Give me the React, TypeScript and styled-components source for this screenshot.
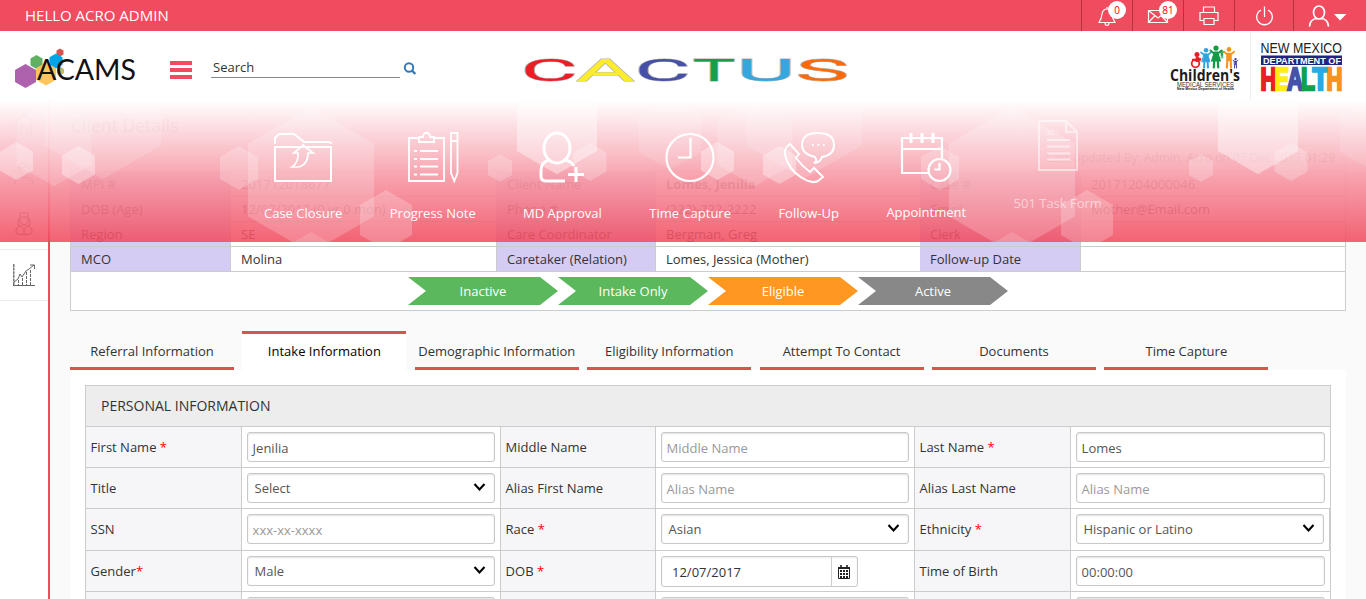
import React from 'react';
import styled, { createGlobalStyle, css } from 'styled-components';

const GlobalStyle = createGlobalStyle`
  * { box-sizing: border-box; }
  html, body { margin: 0; padding: 0; overflow: hidden; }
  body { background: #fafafa; color: #333; font-family: 'Open Sans', 'Noto Sans', sans-serif; font-size: 13px; }
`;

const RED = '#f14b5f';
const LINE = '#ccc';

const Page = styled.div`
  position: relative;
  width: 1366px;
  height: 599px;
  overflow: hidden;
  display: flex;
  flex-direction: column;
`;

const TopBar = styled.header`
  height: 31px;
  flex: none;
  display: flex;
  align-items: stretch;
  background: ${RED};
  color: #fff;
`;

const Greeting = styled.div`
  flex: 1;
  padding-left: 25px;
  font-size: 15px;
  line-height: 31px;
`;

const TopButton = styled.div<{ $width: number }>`
  position: relative;
  width: ${(p) => p.$width}px;
  border-left: 1px solid #b5323f;
  display: flex;
  align-items: center;
  justify-content: center;
`;

const Badge = styled.span`
  position: absolute;
  top: 1px;
  right: 6px;
  width: 18px;
  height: 18px;
  border-radius: 50%;
  background: #fff;
  color: #f00;
  font: 10px/18px 'Open Sans', sans-serif;
  text-align: center;
`;

const Header = styled.div`
  height: 69px;
  flex: none;
  display: flex;
  align-items: flex-start;
  background: #fff;
`;

const LogoSlot = styled.div`
  width: 170px;
  height: 69px;
`;

const Burger = styled.div`
  margin-top: 30px;
  width: 22px;
  height: 18px;
  display: flex;
  flex-direction: column;
  justify-content: space-between;
`;

const BurgerLine = styled.span`
  height: 4px;
  background: ${RED};
`;

const SearchBox = styled.div`
  margin: 24px 0 0 19px;
  padding-left: 2px;
  width: 189px;
  height: 23px;
  border-bottom: 1px solid #888;
  line-height: 25px;
`;

const SearchGlyph = styled.svg`
  margin: 31px 0 0 3px;
`;

const CactusSlot = styled.div`
  margin: 23px 0 0 106px;
  height: 32px;
  svg { overflow: visible; }
`;

const Partners = styled.div`
  margin-left: auto;
  display: flex;
  height: 69px;
`;

const PartnerCell = styled.div<{ $width: number; $line?: boolean }>`
  width: ${(p) => p.$width}px;
  border-left: ${(p) => (p.$line ? '1px solid #eee' : '0')};
`;

const Body = styled.div`
  flex: 1;
  display: flex;
  min-height: 0;
`;

const Sidebar = styled.nav`
  width: 50px;
  flex: none;
  background: #fff;
  color: #555;
  border-right: 2px solid ${RED};
`;

const SideItem = styled.div`
  height: 51px;
  border-bottom: 1px solid #eaeaea;
  display: flex;
  align-items: center;
  justify-content: center;
  &:first-child { height: 48px; }
`;

const Content = styled.main`
  flex: 1;
  padding: 10px 20px 0;
`;

const PageTitle = styled.h1`
  margin: 0 0 0 1px;
  font-size: 17.6px;
  font-weight: 400;
  line-height: 30px;
  height: 35px;
`;

const Details = styled.section`
  border: 1px solid ${LINE};
  background: #fff;
`;

const Updated = styled.div`
  height: 26px;
  padding-right: 10px;
  text-align: right;
  font-size: 12px;
  line-height: 24px;
  background: #fafafa;
  border-bottom: 1px solid ${LINE};
`;

const DetailGrid = styled.div`
  display: grid;
  grid-template-columns: 160px 266px 159px 264px 161px 264px;
  grid-auto-rows: 25px;
`;

const DetailCell = styled.div<{ $label?: boolean; $edge?: boolean; $bold?: boolean }>`
  padding-left: 10px;
  line-height: 25px;
  border-bottom: 1px solid ${LINE};
  font-weight: ${(p) => (p.$bold ? 700 : 400)};
  ${(p) => p.$label && css`background: #d4ccf3;`}
  ${(p) => (p.$label || p.$edge) && css`border-right: 1px solid ${LINE};`}
`;

const Stages = styled.div`
  height: 38px;
  display: flex;
  justify-content: center;
  align-items: center;
`;

const Stage = styled.div<{ $color: string }>`
  width: 150px;
  height: 28px;
  color: #fff;
  text-align: center;
  line-height: 28px;
  background: ${(p) => p.$color};
  clip-path: polygon(0 0, 132px 0, 100% 50%, 132px 100%, 0 100%, 18px 50%);
`;

const Tabs = styled.div`
  margin-top: 20px;
  display: flex;
  gap: 8.4px;
`;

const Tab = styled.div<{ $active?: boolean }>`
  width: 164px;
  height: 39px;
  flex: none;
  text-align: center;
  line-height: 40px;
  white-space: nowrap;
  ${(p) =>
    p.$active
      ? css`background: #fff; color: #000; border-top: 3px solid #d9534f; line-height: 34px;`
      : css`border-bottom: 3px solid #d9534f;`}
`;

const Panel = styled.section`
  background: #fff;
  padding: 15px 15px 0;
  height: 260px;
`;

const FormTable = styled.div`
  border: 1px solid ${LINE};
  border-right: 0;
`;

const FormHead = styled.div`
  height: 41px;
  padding-left: 15px;
  line-height: 40px;
  font-size: 14px;
  background: #ededed;
  border-bottom: 1px solid ${LINE};
  border-right: 1px solid ${LINE};
`;

const FormGrid = styled.div`
  display: grid;
  grid-template-columns: 156px 259px 155px 259px 156px 260px;
  grid-template-rows: 41px 41px 42px 41px 41px;
`;

const FormLabel = styled.div`
  padding-left: 4.6px;
  line-height: 40px;
  background: #f6f6f9;
  border-right: 1px solid ${LINE};
  border-bottom: 1px solid ${LINE};
`;

const FormCell = styled.div<{ $inset?: boolean }>`
  padding: 5px 5px 0;
  border-right: 1px solid ${LINE};
  border-bottom: 1px solid ${LINE};
  ${(p) => p.$inset && css`border-right-width: 2px;`}
`;

const Required = styled.span`
  color: #f00;
`;

const Field = styled.div<{ $muted?: boolean; $select?: boolean }>`
  height: 30px;
  border: 1px solid #c8c8c8;
  border-radius: 3px;
  background: #fff;
  box-shadow: inset 0 1px 2px rgba(0, 0, 0, 0.12);
  padding: ${(p) => (p.$select ? '0 8px 0 6.5px' : '2px 5px 0 4.6px')};
  color: ${(p) => (p.$muted ? '#999' : '#555')};
  line-height: 28px;
  display: flex;
  justify-content: space-between;
  align-items: center;
`;

const DateField = styled.div`
  width: 197px;
  height: 31px;
  display: flex;
  border: 1px solid #c8c8c8;
  border-radius: 3px;
  box-shadow: inset 0 1px 2px rgba(0, 0, 0, 0.08);
`;

const DateText = styled.div`
  flex: 1;
  padding-left: 10px;
  line-height: 31px;
`;

const DateButton = styled.div`
  width: 26px;
  border-left: 1px solid ${LINE};
  display: flex;
  align-items: center;
  justify-content: center;
`;

const Ribbon = styled.div`
  position: absolute;
  left: 0;
  top: 100px;
  width: 1366px;
  height: 142px;
  background: linear-gradient(rgba(255, 255, 255, 0.98), rgba(247, 152, 165, 0.93) 56%, rgba(241, 75, 95, 0.87));
  display: flex;
  gap: 47.4px;
  padding: 32px 0 0 264px;
  overflow: hidden;
`;

const HexLayer = styled.svg`
  position: absolute;
  left: 0;
  top: 0;
`;

const Action = styled.div<{ $lift?: number; $fade?: boolean }>`
  position: relative;
  top: ${(p) => -(p.$lift ?? 0)}px;
  opacity: ${(p) => (p.$fade ? 0.55 : 1)};
  display: flex;
  flex-direction: column;
  align-items: center;
  height: 95px;
  color: #fff;
  white-space: nowrap;
  line-height: 18px;
  svg { margin-bottom: 22px; flex: none; overflow: visible; }
`;

/* Honeycomb motif: centre x, centre y, width, opacity; it repeats every 701px. */
const HEXES: [number, number, number, number][] = [
  [16.5, 61, 33, 0.34], [54, 43, 75, 0.16], [103, 12, 116, 0.14], [78.5, 65, 33, 0.34],
  [239, 68, 38, 0.22], [311, 80, 126, 0.2], [311, 162, 52, 0.14], [386, 120, 52, 0.22],
  [557, 28, 80, 0.4], [500, 68, 24, 0.22], [590, 62, 33, 0.24], [670, 34, 62, 0.12],
];

const hexPoints = (cx: number, cy: number, w: number) => {
  const r = w / 1.732;
  const h = w / 2;
  return [[0, -r], [h, -r / 2], [h, r / 2], [0, r], [-h, r / 2], [-h, -r / 2]]
    .map(([x, y]) => `${cx + x},${cy + y}`)
    .join(' ');
};

const Honeycomb = () => (
  <HexLayer width="1366" height="142">
    {[0, 701].map((dx) =>
      HEXES.map(([x, y, w, o], i) => (
        <polygon key={`${dx}-${i}`} points={hexPoints(x + dx, y, w)} fill="#fff" fillOpacity={o} />
      )),
    )}
  </HexLayer>
);

const AcamsLogo = () => (
  <svg width="150" height="69">
    <polygon points={hexPoints(60, 21.5, 7)} fill="#d9534f" />
    <polygon points={hexPoints(36.5, 31, 12)} fill="#5fb05f" />
    <polygon points={hexPoints(56, 30, 13)} fill="#00a5e9" />
    <polygon points={hexPoints(46, 43, 20)} fill="#fdc55c" />
    <polygon points={hexPoints(60.5, 40, 7)} fill="#c9b56c" />
    <polygon points={hexPoints(25.5, 45, 21)} fill="#ae62ae" />
    <text x="37" y="49.2" fontFamily="Lato" fontSize="28.5" fill="#111" textLength="99" lengthAdjust="spacingAndGlyphs">ACAMS</text>
  </svg>
);

const CACTUS: [string, number, number, string][] = [
  ['C', 525, 49, '#f01c24'], ['A', 577, 57, '#fdec2a'], ['C', 639, 48, '#4650a8'],
  ['T', 694, 40, '#14a04a'], ['U', 742, 48, '#34a7e0'], ['S', 799, 47, '#ff6a08'],
];

/* Advance width, left ink edge and right ink edge of each letter, in em. */
const CACTUS_METRICS: Record<string, [number, number, number]> = {
  C: [0.653, 0.052, 0.61], A: [0.658, 0.01, 0.648], T: [0.6, 0.02, 0.58], U: [0.648, 0.06, 0.588], S: [0.599, 0.035, 0.562],
};

const CactusLogo = () => (
  <svg width="330" height="32" fontFamily="Roboto" fontWeight="400" fontSize="30.5">
    {CACTUS.map(([ch, x, w, color], i) => {
      const [adv, l, r] = CACTUS_METRICS[ch];
      const unit = w / (r - l);
      return (
        <text
          key={i}
          x={x - 523 - l * unit}
          y="26.5"
          fill={color}
          stroke="#b4b4b4"
          strokeWidth="0.8"
          paintOrder="stroke"
          textLength={adv * unit}
          lengthAdjust="spacingAndGlyphs"
        >
          {ch}
        </text>
      );
    })}
  </svg>
);

const Kid = ({ x, y, s, color, skirt }: { x: number; y: number; s: number; color: string; skirt?: boolean }) => (
  <g transform={`translate(${x} ${y}) scale(${s})`} fill={color} stroke={color} strokeLinecap="round">
    <circle cx="0" cy="2.4" r="2.3" stroke="none" />
    <path d="M-5 4.5 L-2 7 L2 7 L5 4.5" fill="none" strokeWidth="1.8" />
    {skirt ? <path d="M-1.5 6 L1.5 6 L4 14 L-4 14Z" /> : <path d="M-2 6 L2 6 L2.2 13 L-2.2 13Z" />}
    <path d="M-1.6 13 L-2 20 M1.6 13 L2 20" strokeWidth="2" />
  </g>
);

const ChildrensLogo = () => (
  <svg width="80" height="69">
    <Kid x={36} y={17} s={0.98} color="#2fa3dc" skirt />
    <Kid x={46} y={14.5} s={1.1} color="#139a48" skirt />
    <Kid x={59} y={16} s={1.03} color="#f8941d" />
    <Kid x={65.5} y={27} s={0.5} color="#3c3b98" />
    <Kid x={52} y={19} s={0.4} color="#139a48" />
    <g fill="none" stroke="#ec1c24" strokeWidth="1.8">
      <circle cx="25.5" cy="32.5" r="3.8" />
      <path d="M27 26V31M27 27L31 29M22 29H27" strokeWidth="2.6" />
      <circle cx="27" cy="23.5" r="1.6" fill="#ec1c24" />
    </g>
    <text x="0" y="50" fontFamily="Open Sans" fontWeight="700" fontSize="15.5" fill="#1b1b1b" textLength="70" lengthAdjust="spacingAndGlyphs">Children's</text>
    <text x="7" y="56" fontFamily="Liberation Sans" fontSize="7" fill="#333" textLength="57" lengthAdjust="spacingAndGlyphs">MEDICAL SERVICES</text>
    <text x="7" y="59.2" fontFamily="Liberation Sans" fontWeight="700" fontSize="3.8" fill="#111" textLength="57" lengthAdjust="spacingAndGlyphs">New Mexico Department of Health</text>
  </svg>
);

const HEALTH: [string, number, number, string][] = [
  ['H', 9.5, 16, '#ee1c25'], ['E', 23.5, 14.5, '#ffee10'], ['A', 36, 16, '#4652a6'],
  ['L', 50, 14, '#12a04b'], ['T', 61.5, 16, '#2da8e0'], ['H', 75.5, 16, '#f7941e'],
];

const HealthLogo = () => (
  <svg width="100" height="69">
    <text x="9.5" y="21.5" fontFamily="Liberation Sans" fontSize="15.5" fill="#222" textLength="81.5" lengthAdjust="spacingAndGlyphs">NEW MEXICO</text>
    <rect x="10" y="24.5" width="81" height="9.5" fill="#20267f" />
    <text x="12" y="32.5" fontFamily="Liberation Sans" fontWeight="700" fontSize="9" fill="#fff" textLength="78" lengthAdjust="spacingAndGlyphs">DEPARTMENT OF</text>
    {HEALTH.map(([ch, x, w, color], i) => (
      <text
        key={i}
        x={x}
        y="59"
        fontFamily="Liberation Sans"
        fontWeight="700"
        fontSize="31.5"
        fill={color}
        stroke={color}
        strokeWidth="2.4"
        textLength={w}
        lengthAdjust="spacingAndGlyphs"
      >
        {ch}
      </text>
    ))}
  </svg>
);

const Ico = ({ w = 22, h = 22, sw = 1.2, children }: { w?: number; h?: number; sw?: number; children: React.ReactNode }) => (
  <svg width={w} height={h} viewBox={`0 0 ${w} ${h}`} fill="none" stroke="currentColor" strokeWidth={sw}>
    {children}
  </svg>
);

const Chevron = () => (
  <svg width="13" height="11" viewBox="0 0 13 11" fill="none" stroke="#000" strokeWidth="2.1">
    <path d="M1.5 1L6.5 6.5L11.5 1" />
  </svg>
);

const ROWS: string[][] = [
  ['MPI #', '201712018677', 'Client Name', 'Lomes, Jenilia', 'Case #', '20171204000046'],
  ['DOB (Age)', '12/07/2017 (0 yr 0 mon)', 'Phone #', '(222)-222-2222', 'Email', 'Mother@Email.com'],
  ['Region', 'SE', 'Care Coordinator', 'Bergman, Greg', 'Clerk', ''],
  ['MCO', 'Molina', 'Caretaker (Relation)', 'Lomes, Jessica (Mother)', 'Follow-up Date', ''],
];

const STAGES = [
  ['Inactive', '#5cb85c'], ['Intake Only', '#5cb85c'], ['Eligible', '#ff9721'], ['Active', '#888'],
];

const TABS = [
  'Referral Information', 'Intake Information', 'Demographic Information', 'Eligibility Information',
  'Attempt To Contact', 'Documents', 'Time Capture',
];

type FieldDef = { label: string; req?: string; text?: string; kind?: 'select' | 'hint' | 'date'; inset?: boolean };

const FIELDS: FieldDef[] = [
  { label: 'First Name', req: ' *', text: 'Jenilia' },
  { label: 'Middle Name', text: 'Middle Name', kind: 'hint' },
  { label: 'Last Name', req: ' *', text: 'Lomes' },
  { label: 'Title', text: 'Select', kind: 'select' },
  { label: 'Alias First Name', text: 'Alias Name', kind: 'hint' },
  { label: 'Alias Last Name', text: 'Alias Name', kind: 'hint' },
  { label: 'SSN', text: 'xxx-xx-xxxx', kind: 'hint' },
  { label: 'Race', req: ' *', text: 'Asian', kind: 'select' },
  { label: 'Ethnicity', req: ' *', text: 'Hispanic or Latino', kind: 'select', inset: true },
  { label: 'Gender', req: '*', text: 'Male', kind: 'select' },
  { label: 'DOB', req: ' *', text: '12/07/2017', kind: 'date' },
  { label: 'Time of Birth', text: '00:00:00' },
  { label: '' }, { label: '' }, { label: '' },
];

const CalendarGlyph = () => (
  <svg width="14" height="14" viewBox="0 0 14 14" fill="none" stroke="#222">
    <path d="M0.5 2.5H11.5V13.5H0.5Z" />
    <path d="M0 3H12" strokeWidth="2" />
    <path d="M3 0V3M9 0V3" strokeWidth="1.6" />
    <path d="M2 6H10M2 9H10M2 12H10" strokeWidth="2" strokeDasharray="2 1" />
  </svg>
);

const FieldControl = ({ f }: { f: FieldDef }) => {
  if (f.kind === 'date') {
    return (
      <DateField>
        <DateText>{f.text}</DateText>
        <DateButton><CalendarGlyph /></DateButton>
      </DateField>
    );
  }
  return (
    <Field $muted={f.kind === 'hint'} $select={f.kind === 'select'}>
      <span>{f.text}</span>
      {f.kind === 'select' && <Chevron />}
    </Field>
  );
};

const ACTIONS: { label: string; lift?: number; fade?: boolean; icon: React.ReactNode }[] = [
  {
    label: 'Case Closure',
    icon: (
      <Ico w={58} h={50} sw={2}>
        <path d="M1 12V6L5 2H20L30 10H54Q57 10 57 12" />
        <path d="M1 15H57V49H1Z" />
        <path d="M29 13L39 21H34Q34 33 24 35H18Q25 30 24 21H20Z" strokeWidth="1.7" />
      </Ico>
    ),
  },
  {
    label: 'Progress Note',
    icon: (
      <Ico w={51} h={50} sw={1.8}>
        <path d="M12 6H2V49H37V6H27M12 10V5H16Q16 1 19.5 1Q23 1 23 5H27V10Z" />
        <path d="M13 19H31M13 27H31M13 34.5H31M13 42.5H31M7 19H10M7 27H10M7 34.5H10M7 42.5H10" />
        <path d="M44 1H50.5V41L47.3 49L44 41ZM44 9H50.5" />
      </Ico>
    ),
  },
  {
    label: 'MD Approval',
    icon: (
      <Ico w={46} h={50} sw={3}>
        <ellipse cx="18" cy="16" rx="13" ry="15" />
        <path d="M10 28Q2 30 2 39V44Q2 49 7 49H26M26 28Q32 29 35 34M37 35V50M29 42.5H45" />
      </Ico>
    ),
  },
  {
    label: 'Time Capture',
    icon: (
      <Ico w={50} h={50} sw={2.2}>
        <circle cx="25" cy="25.5" r="23.5" />
        <path d="M25.5 6V25.5H13" />
      </Ico>
    ),
  },
  {
    label: 'Follow-Up',
    icon: (
      <Ico w={50} h={50} sw={2}>
        <path d="M6 12Q0 16 1 22Q4 38 20 47Q28 52 34 49L39 45L30 36L26 40Q18 34 12 26L15 22Z" />
        <path d="M30 31Q34 29 31 25Q18 22 18 13Q18 1 34 1Q50 1 50 13Q50 23 38 25Q36 31 30 31Z" />
        <path d="M28 13H29.6M33.5 13H35.1M39 13H40.6" />
      </Ico>
    ),
  },
  {
    label: 'Appointment',
    lift: 1,
    icon: (
      <Ico w={51} h={50} sw={2.2}>
        <path d="M27 42H1V7H41V27M1 18H41" />
        <path d="M10 2V12M21 2V12M32 2V12" strokeWidth="3" />
        <circle cx="38.5" cy="39" r="11" />
        <path d="M38.5 32V38.5H33.5" />
      </Ico>
    ),
  },
  {
    label: '501 Task Form',
    lift: 12,
    fade: true,
    icon: (
      <Ico w={40} h={52} sw={2}>
        <path d="M1 1H28L39 12V50H1ZM28 1V12H39" />
        <path d="M9 20H32M9 26.5H32M9 33.5H32M9 39.5H32" />
        <text x="8" y="14.5" fontSize="8" fontWeight="400" fill="currentColor" stroke="none">501</text>
      </Ico>
    ),
  },
];

export default function App() {
  return (
    <>
      <GlobalStyle />
      <Page>
        <TopBar>
          <Greeting>HELLO ACRO ADMIN</Greeting>
          <TopButton $width={51}>
            <Ico w={20} h={22}>
              <path d="M2 17.5Q4.5 14 5 9Q6 4 10 4Q14 4 15 9Q15.5 14 18 17.5ZM8 17.5Q8 20.5 10 20.5Q12 20.5 12 17.5M10 4V2" />
            </Ico>
            <Badge>0</Badge>
          </TopButton>
          <TopButton $width={51}>
            <Ico w={22} h={16}>
              <path d="M1.5 2.5H20.5V14.5H1.5ZM1.5 2.5L11 10L20.5 2.5M1.5 14.5L8 7.5M20.5 14.5L14 7.5" />
            </Ico>
            <Badge>81</Badge>
          </TopButton>
          <TopButton $width={51}>
            <Ico w={20} h={20} sw={1.2}>
              <path d="M4.5 6V1H15.5V6M4.5 14.5H1V6.5H19V14.5H15.5M5 12.5H15V18.5H5Z" />
            </Ico>
          </TopButton>
          <TopButton $width={59}>
            <Ico w={20} h={22} sw={1.3}>
              <path d="M7 5A7.8 7.8 0 1 0 14 5M10.5 1.5V12" />
            </Ico>
          </TopButton>
          <TopButton $width={73}>
            <Ico w={44} h={22} sw={1.7}>
              <ellipse cx="11" cy="7.5" rx="5.5" ry="6.5" />
              <path d="M1.5 21.5Q2 14 9 13.5M13 13.5Q20 14 20.5 21.5" />
              <path d="M26 9H38.5L32 15.5Z" fill="currentColor" stroke="none" />
            </Ico>
          </TopButton>
        </TopBar>
        <Header>
          <LogoSlot><AcamsLogo /></LogoSlot>
          <Burger><BurgerLine /><BurgerLine /><BurgerLine /></Burger>
          <SearchBox>Search</SearchBox>
          <SearchGlyph width="14" height="14" viewBox="0 0 14 14" fill="none" stroke="#337ab7" strokeWidth="2">
            <circle cx="6" cy="5.5" r="4.2" />
            <path d="M9 8.5L12.3 12" strokeWidth="2.5" />
          </SearchGlyph>
          <CactusSlot><CactusLogo /></CactusSlot>
          <Partners>
            <PartnerCell $width={80}><ChildrensLogo /></PartnerCell>
            <PartnerCell $width={116} $line><HealthLogo /></PartnerCell>
          </Partners>
        </Header>
        <Body>
          <Sidebar>
            <SideItem>
              <Ico w={22} h={22} sw={1}><path d="M1 11L11 1L21 11M4 9V21H8V13H14V21H18V9" /></Ico>
            </SideItem>
            <SideItem>
              <Ico w={20} h={22} sw={1}><circle cx="10" cy="7" r="6" /><path d="M1 22Q2 15 10 15Q18 15 19 22M4 6Q10 7 12 4L16 7" /></Ico>
            </SideItem>
            <SideItem>
              <Ico w={18} h={24} sw={1}><path d="M5 1H13V5H5ZM4 6Q1 14 5 14M14 6Q17 14 13 14M5 5Q4 13 9 13Q14 13 13 5M1 21Q0 15 6 14L9 18L12 14Q18 15 17 21Q14 23 9 22.5Q4 23 1 21ZM9 18V23" /></Ico>
            </SideItem>
            <SideItem>
              <Ico w={22} h={22} sw={0.9}>
                <path d="M0 21.5H22" />
                <path d="M0.8 0V22" strokeWidth="1.2" strokeDasharray="3 0.6" />
                <path d="M1 18L5 15L7 10L9 13L13 7L16 5L21 1M17 1H21.5V5" />
                <path d="M5.5 16V22M9.5 14V22M13.5 8V22M17.5 6V22" strokeDasharray="3 1" />
              </Ico>
            </SideItem>
          </Sidebar>
          <Content>
            <PageTitle>Client Details</PageTitle>
            <Details>
              <Updated>Last Updated By: Admin, Acro on 07 Dec 2017 01:29</Updated>
              <DetailGrid>
                {ROWS.map((row, r) =>
                  row.map((t, c) => (
                    <DetailCell key={`${r}-${c}`} $label={c % 2 === 0} $edge={c === 1} $bold={r === 0 && c === 3}>
                      {t}
                    </DetailCell>
                  )),
                )}
              </DetailGrid>
              <Stages>
                {STAGES.map(([t, color]) => <Stage key={t} $color={color}>{t}</Stage>)}
              </Stages>
            </Details>
            <Tabs>
              {TABS.map((t, i) => <Tab key={t} $active={i === 1}>{t}</Tab>)}
            </Tabs>
            <Panel>
              <FormTable>
                <FormHead>PERSONAL INFORMATION</FormHead>
                <FormGrid>
                  {FIELDS.map((f, i) => (
                    <React.Fragment key={i}>
                      <FormLabel>{f.label}{f.req && <Required>{f.req}</Required>}</FormLabel>
                      <FormCell $inset={f.inset}><FieldControl f={f} /></FormCell>
                    </React.Fragment>
                  ))}
                </FormGrid>
              </FormTable>
            </Panel>
          </Content>
        </Body>
        <Ribbon>
          <Honeycomb />
          {ACTIONS.map((a) => (
            <Action key={a.label} $lift={a.lift} $fade={a.fade}>
              {a.icon}
              <span>{a.label}</span>
            </Action>
          ))}
        </Ribbon>
      </Page>
    </>
  );
}
